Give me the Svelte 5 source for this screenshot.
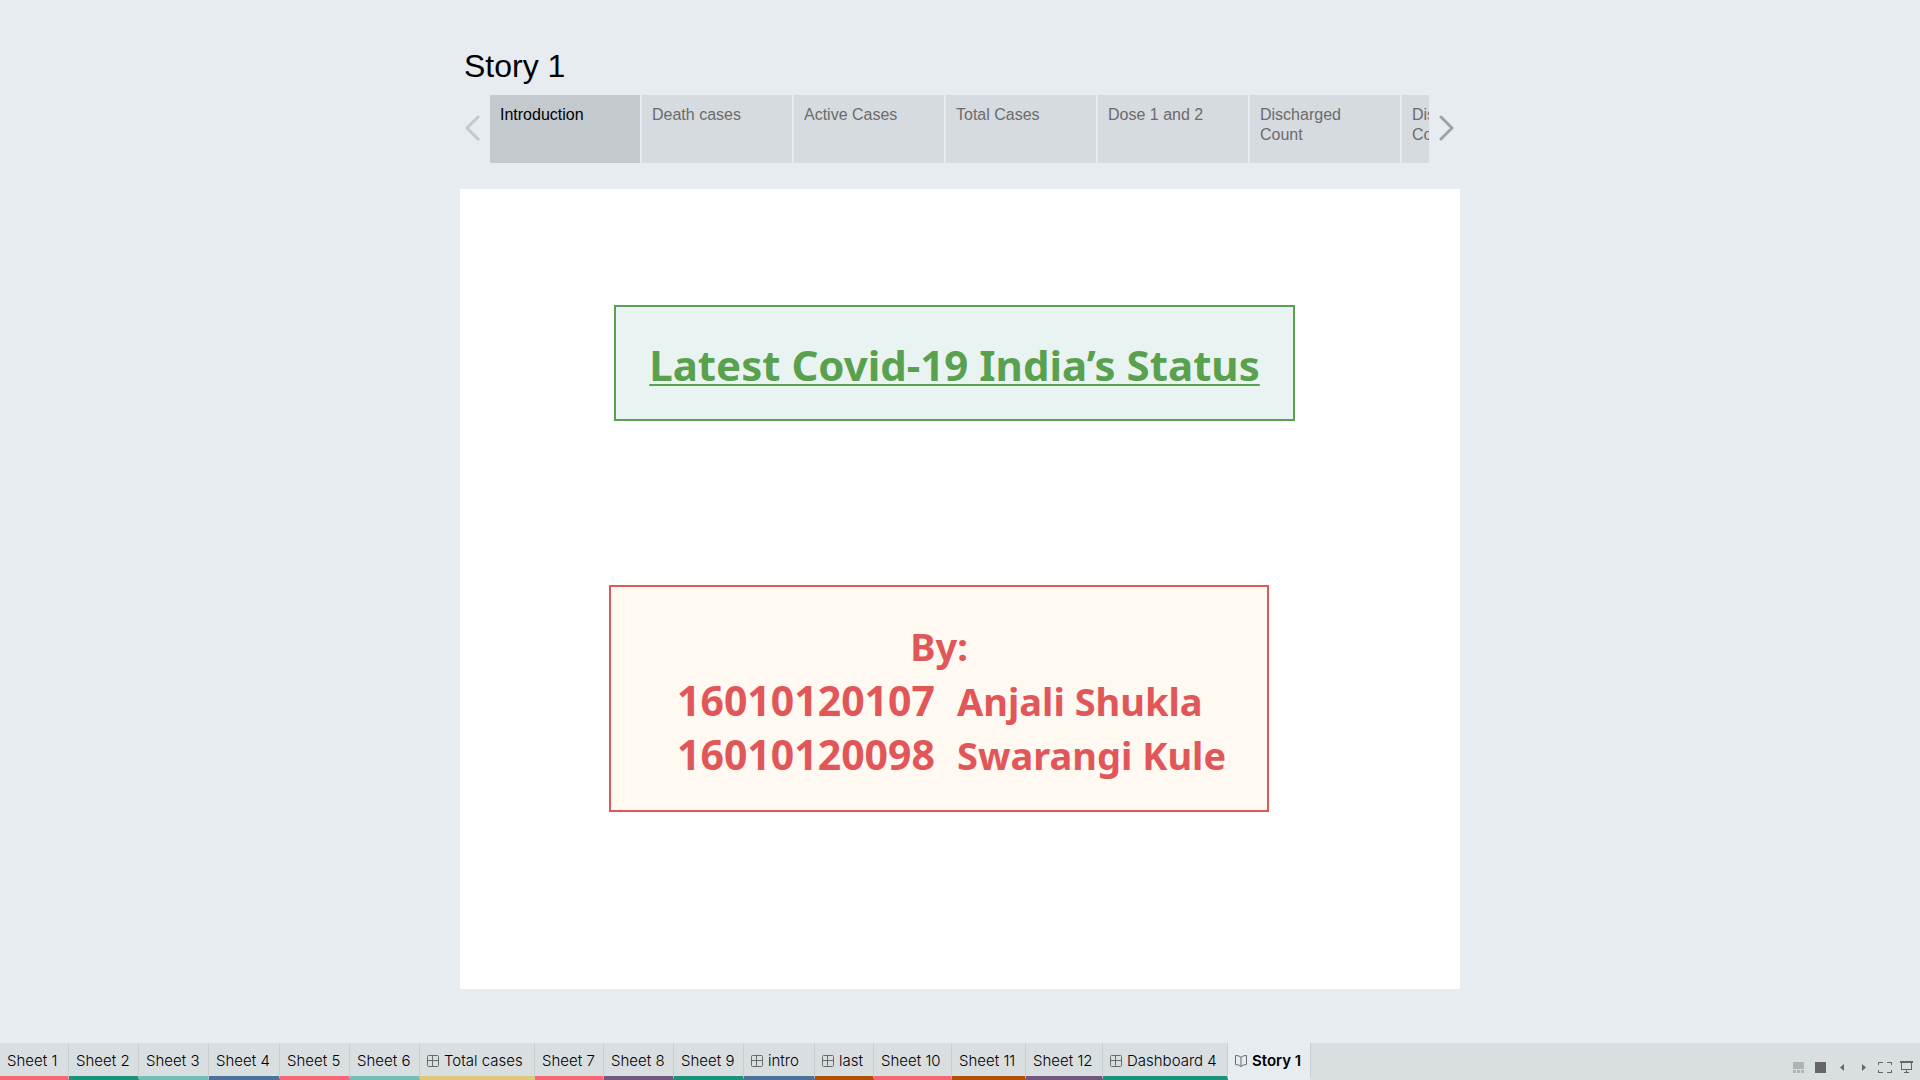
<script>
  const points = ['Introduction', 'Death cases', 'Active Cases', 'Total Cases', 'Dose 1 and 2', 'Discharged Count', 'Discharged Count'];
  const sheets = [
    { name: 'Sheet 1', color: 'rose', width: 69 },
    { name: 'Sheet 2', color: 'green', width: 70 },
    { name: 'Sheet 3', color: 'teal', width: 70 },
    { name: 'Sheet 4', color: 'blue', width: 71 },
    { name: 'Sheet 5', color: 'rose', width: 70 },
    { name: 'Sheet 6', color: 'teal', width: 70 },
    { name: 'Total cases', color: 'sand', width: 115, dashboard: true },
    { name: 'Sheet 7', color: 'rose', width: 69 },
    { name: 'Sheet 8', color: 'purple', width: 70 },
    { name: 'Sheet 9', color: 'green', width: 70 },
    { name: 'intro', color: 'blue', width: 71, dashboard: true },
    { name: 'last', color: 'rust', width: 59, dashboard: true },
    { name: 'Sheet 10', color: 'rose', width: 78 },
    { name: 'Sheet 11', color: 'rust', width: 74 },
    { name: 'Sheet 12', color: 'purple', width: 77 },
    { name: 'Dashboard 4', color: 'green', width: 125, dashboard: true },
    { name: 'Story 1', color: 'none', width: 83, story: true }
  ];
  let currentPoint = $state(0);
  let currentSheet = $state(16);
</script>

<div class="page">
  <main class="story">
    <h1>Story 1</h1>
    <nav class="navigator" aria-label="Story points">
      <button class="arrow back" aria-label="Previous story point" disabled>
        <svg width="16" height="26" viewBox="0 0 16 26"><path d="M13 2L2 13L13 24" /></svg>
      </button>
      <div class="points">
        {#each points as point, i}
          <button class="point" class:current={i === currentPoint} onclick={() => (currentPoint = i)}>{point}</button>
        {/each}
      </div>
      <button class="arrow next" aria-label="Next story point">
        <svg width="16" height="26" viewBox="0 0 16 26"><path d="M3 2L14 13L3 24" /></svg>
      </button>
    </nav>
    <section class="canvas">
      <h2 class="card title"><u>Latest Covid-19 India’s Status</u></h2>
      <div class="card authors">
        <p class="by">By:</p>
        <dl>
          <dt>16010120107</dt><dd>Anjali Shukla</dd>
          <dt>16010120098</dt><dd>Swarangi Kule</dd>
        </dl>
      </div>
    </section>
  </main>

  <footer>
    <nav class="sheets" aria-label="Sheets">
      {#each sheets as sheet, i}
        <button class="sheet {sheet.color}" class:active={i === currentSheet} style:width="{sheet.width}px" onclick={() => (currentSheet = i)}>
          {#if sheet.dashboard}
            <svg width="12" height="12" viewBox="0 0 12 12"><path d="M1.500 .5h9a1 1 0 0 1 1 1v9a1 1 0 0 1-1 1h-9a1 1 0 0 1-1-1v-9a1 1 0 0 1 1-1zM5.500 .5v11M.5 5.500h11" /></svg>
          {:else if sheet.story}
            <svg width="12" height="12" viewBox="0 0 12 12"><path d="M.5 .5L3.500 .8L6 2.300L8.500 .8L11.500 .5V9.500L8.500 10L6 11.500L3.500 10L.5 9.500zM6 2.300v9" /></svg>
          {/if}
          <span>{sheet.name}</span>
        </button>
      {/each}
    </nav>
    <div class="tools">
      <button aria-label="Show filmstrip"><svg class="faded" width="14" height="12" viewBox="0 0 14 12"><path d="M0 1h11v7H0zM0 9h3v3H0zM4 9h3v3H4zM8 9h3v3H8z" /></svg></button>
      <button aria-label="Show sheet sorter"><svg width="15" height="12" viewBox="0 0 15 12"><path d="M0 1h11v11H0z" /></svg></button>
      <button aria-label="Previous sheet"><svg width="12" height="12" viewBox="0 0 12 12"><path d="M6 3v7L2 6.500z" /></svg></button>
      <button aria-label="Next sheet"><svg width="12" height="12" viewBox="0 0 12 12"><path d="M4 3v7l4-3.500z" /></svg></button>
      <button aria-label="Full screen"><svg width="14" height="12" viewBox="0 0 14 12"><path d="M0 1h5v1H1v2H0zM9 1h5v3h-1V2H9zM0 9h1v2h4v1H0zM13 9h1v3H9v-1h4z" /></svg></button>
      <button aria-label="Presentation mode"><svg width="13" height="12" viewBox="0 0 13 12"><path d="M0 0h13v2H0zM1 2h1v6h9V2h1v7H7v2h2v1H4v-1h2V9H1z" /></svg></button>
    </div>
  </footer>
</div>

<style>
  :global(body) { background: #e6ecf0; }
  * { box-sizing: border-box; }
  button { border: 0; padding: 0; margin: 0; background: none; font: inherit; color: inherit; text-align: left; cursor: pointer; }
  .page { min-height: 100vh; display: flex; flex-direction: column; justify-content: space-between; background: #e6ecf0; font-family: "Liberation Sans", Arial, sans-serif; overflow: hidden; }
  .story { width: 100%; max-width: 1000px; margin: 0 auto; padding-top: 46px; }
  h1 { margin: 0; padding-left: 4px; font-size: 32px; line-height: 40px; font-weight: 400; color: #000; }
  .navigator { display: flex; margin-top: 9px; height: 68px; }
  .arrow { flex: none; width: 30px; display: flex; align-items: center; padding: 0 5px 2px; }
  .arrow svg { flex: none; }
  .arrow path { fill: none; stroke: #9fa3a6; stroke-width: 3; stroke-linecap: round; stroke-linejoin: round; }
  .next { width: 31px; padding: 0 6px 2px 9px; }
  .back path { stroke: #c4c8cb; }
  .points { flex: 1; min-width: 0; display: flex; gap: 2px; overflow: hidden; }
  .point { flex: none; width: 150px; padding: 10px 24px 10px 10px; display: flex; background: #d6dbdf; color: #6b6b6b; font-size: 16px; line-height: 20px; }
  .point.current { background: #c4c9cd; color: #000; }
  .canvas { margin-top: 26px; height: 800px; padding: 116px 154px; background: #fff; font-family: "Noto Sans", sans-serif; font-weight: 700; }
  .card { border: 2px solid; }
  .title { margin: 0; width: 681px; height: 116px; padding-top: 4px; display: flex; align-items: center; justify-content: center; border-color: #59a14f; background: #e9f3f2; color: #59a14f; font-size: 42px; line-height: 56px; }
  .title u { text-decoration-thickness: 2px; text-underline-offset: 3px; text-decoration-skip-ink: none; }
  .authors { margin: 164px 0 0 -5px; width: 660px; height: 227px; padding: 32px 0 0; border-color: #e15759; background: #fff9f2; color: #e15759; font-size: 38px; line-height: 54px; }
  .by { margin: 0; text-align: center; }
  dl { margin: 0; padding-left: 66px; display: grid; grid-template-columns: 280px max-content; grid-auto-rows: 54px; align-items: baseline; }
  dt { font-size: 41px; }
  dd { margin: 0; }
  footer { display: flex; justify-content: space-between; height: 37px; background: #d9dee1; }
  .sheets { display: flex; }
  .sheet { display: flex; align-items: center; gap: 5px; padding: 3px 0 0 7px; border-right: 1px solid #c9ced2; border-bottom: 4px solid var(--tint); color: #000; font-family: Inter, sans-serif; font-size: 15px; font-weight: 300; line-height: 20px; white-space: nowrap; }
  .sheet svg { flex: none; fill: none; stroke: #6b6b6b; }
  .rose { --tint: #f96575; }
  .green { --tint: #1b937b; }
  .teal { --tint: #72bebb; }
  .blue { --tint: #4e739b; }
  .sand { --tint: #dfc977; }
  .purple { --tint: #72587f; }
  .rust { --tint: #ac5100; }
  .none { --tint: transparent; }
  .active { background: #e6ecf0; font-weight: 600; }
  .tools { display: flex; align-items: flex-end; gap: 8px; padding: 0 7px 7px 0; }
  .tools svg { display: block; fill: #666; }
  .tools .faded { fill: #b0b3b5; }
</style>
